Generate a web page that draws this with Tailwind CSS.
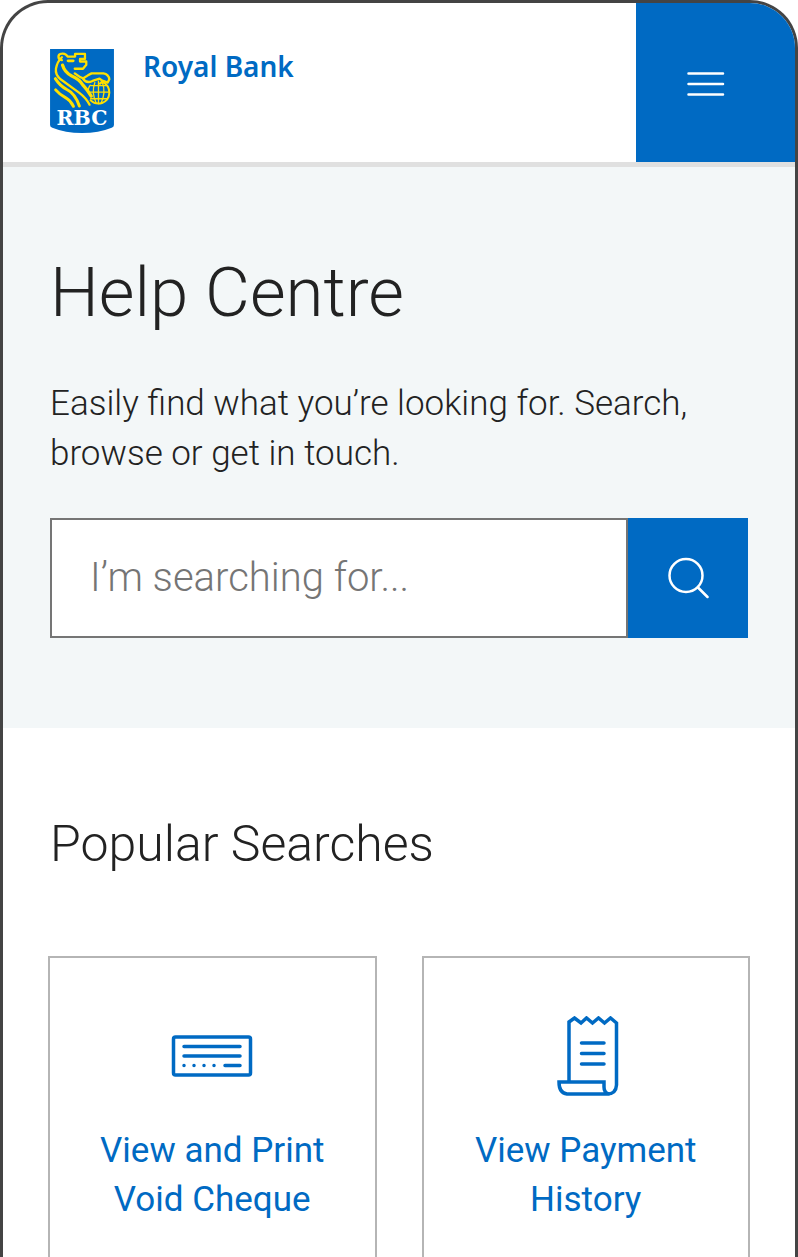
<!DOCTYPE html>
<html lang="en">
<head>
<meta charset="utf-8">
<meta name="viewport" content="width=device-width, initial-scale=1">
<title>Help Centre - Royal Bank</title>
<script src="https://cdn.jsdelivr.net/npm/@tailwindcss/browser@4"></script>
</head>
<body class="bg-white font-['Roboto',sans-serif] text-[#222222]">
<div class="flex h-screen flex-col overflow-hidden rounded-t-[48px] border-[3px] border-b-0 border-[#444444] bg-white">
  <header class="flex shrink-0 items-stretch justify-between border-b-[5px] border-[#e0e0e0]">
    <a href="#" class="flex items-start gap-[29px] pt-[46px] pb-[29px] pl-[47px] text-[#006ac3]">
      <svg class="h-[84px] w-[64px]" viewBox="28 27 194 255" aria-hidden="true">
        <path d="M28 27H222V258Q222 264 215 266Q176 282 125 282Q74 282 35 266Q28 264 28 258Z" fill="#006ac3"/>
        <g fill="none" stroke="#ffe000" stroke-width="7" stroke-linejoin="round" stroke-linecap="round">
          <path d="M64 61C50 59 50 42 64 41Q71 40 76 44L82 50H104V42H134V57H119V65H138V75L128 87H103"/>
          <path d="M83 63H98" stroke-width="9"/>
          <path d="M64 52Q50 65 46 86Q43 105 60 119Q88 139 117 160Q138 176 148 196"/>
          <path d="M66 76Q72 98 94 109Q118 119 128 137Q142 152 153 170" stroke-width="10"/>
          <path d="M44 117Q58 139 79 150Q104 162 117 200" stroke-width="9"/>
          <path d="M45 151Q58 166 77 176Q91 184 99 201" stroke-width="9"/>
          <path d="M103 101Q118 113 129 116L143 107L154 101H190Q206 104 208 119L203 129L191 124"/>
          <path d="M128 117Q138 133 157 124L178 117L188 124L180 132"/>
          <path d="M187 127Q208 137 208 160Q207 183 186 191Q166 197 151 183" stroke-width="6"/>
          <path d="M150 137Q142 146 145 160M143 158H207M151 178H201M153 138H199M175 125V193M164 129Q153 159 168 191M187 129Q198 159 183 191" stroke-width="4"/>
        </g>
        <text x="125" y="258" text-anchor="middle" fill="#ffffff" font-family="DejaVu Serif, serif" font-weight="700" font-size="62">RBC</text>
      </svg>
      <span class="font-['Noto_Sans',sans-serif] text-[28px] leading-[34px] font-semibold">Royal Bank</span>
    </a>
    <button type="button" aria-label="Menu" class="flex w-[159px] items-center justify-center bg-[#006ac3] pt-[2px] pr-[20px]">
      <svg class="h-[26px] w-[38px]" viewBox="0 0 38 26" fill="none" stroke="#ffffff" stroke-width="2.500" stroke-linecap="round" aria-hidden="true"><path d="M1.500 2.500H36M1.500 13H36M1.500 23.500H36"/></svg>
    </button>
  </header>
  <main class="grow overflow-y-auto [scrollbar-width:none]">
    <section class="bg-[#f3f7f8] px-[47px] pt-[84px] pb-[90px]">
      <h1 class="text-[69px] leading-[84px] font-light">Help Centre</h1>
      <p class="mt-[44px] text-[35px] leading-[50px] font-light">Easily find what you’re looking for. Search, browse or get in touch.</p>
      <form class="mt-[39px] flex h-[120px]" role="search">
        <input type="search" aria-label="Search" placeholder="I’m searching for..." class="min-w-0 grow border-2 border-[#757575] bg-white px-[38px] text-[40px] font-light outline-none placeholder:text-[#757575]">
        <button type="submit" aria-label="Search" class="flex w-[120px] shrink-0 items-center justify-center bg-[#006ac3]">
          <svg class="size-[42px]" viewBox="0 0 42 42" fill="none" stroke="#ffffff" stroke-width="2.500" stroke-linecap="round" aria-hidden="true"><circle cx="19" cy="18.500" r="16.500"/><path d="M31 30.500L40.500 40"/></svg>
        </button>
      </form>
    </section>
    <section class="px-[45px] pt-[86px] pb-[80px]">
      <h2 class="px-[2px] text-[50px] leading-[60px] font-light">Popular Searches</h2>
      <div class="mt-[82px] grid grid-cols-2 gap-[45px] text-center text-[35px] leading-[49px] text-[#006ac3]">
        <a href="#" class="flex flex-col items-center border-2 border-[#b5b5b5] px-[31px] pt-[58px] pb-[60px]">
          <svg class="size-[82px]" viewBox="0 0 82 82" fill="none" stroke="#006ac3" stroke-width="3.500" stroke-linecap="round" aria-hidden="true">
            <rect x="2.500" y="21" width="77" height="38" rx="2"/>
            <path d="M13 30.500H69M13 40H69M54 49.500H69"/>
            <path d="M13 49.500h.01M23 49.500h.01M33 49.500h.01M43 49.500h.01"/>
          </svg>
          <span class="mt-[28px]">View and Print Void Cheque</span>
        </a>
        <a href="#" class="flex flex-col items-center border-2 border-[#b5b5b5] px-[31px] pt-[58px] pb-[60px]">
          <svg class="size-[82px]" viewBox="-7 1 82 82" fill="none" stroke="#006ac3" stroke-width="3.500" stroke-linecap="round" aria-hidden="true">
            <path d="M17 66V7L22.500 3L29 8L34.500 3L40.500 8L46.500 3L52.500 8L58.500 3L64.500 8V70Q64 79 55 79H15Q7 78 7 67H52V72Q52 78 57 79"/>
            <path d="M29.500 28H52M29.500 38.500H52M29.500 49H52"/>
          </svg>
          <span class="mt-[28px]">View Payment History</span>
        </a>
      </div>
    </section>
  </main>
</div>
</body>
</html>
